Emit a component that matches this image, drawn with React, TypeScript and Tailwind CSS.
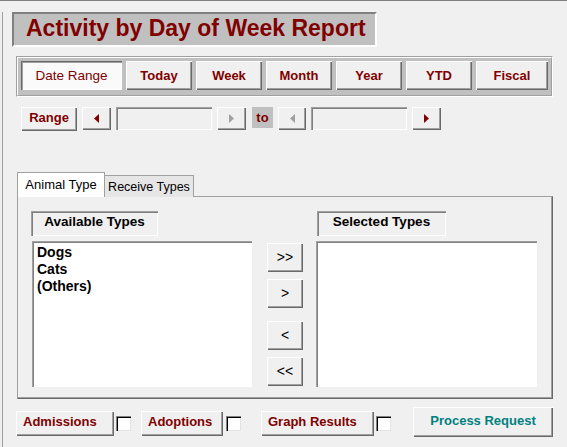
import React, { useState } from 'react';

// classic windows bevels
const raised =
  'bg-[#f0f0f0] shadow-[inset_1px_1px_0_#ffffff,inset_-1px_-1px_0_#696969,inset_-2px_-2px_0_#a0a0a0]';
const pressed =
  'bg-[#fafafa] shadow-[inset_1px_1px_0_#696969,inset_2px_2px_0_#a0a0a0,inset_-1px_-1px_0_#ffffff]';
const sunken =
  'shadow-[inset_1px_1px_0_#a0a0a0,inset_2px_2px_0_#808080,inset_-1px_-1px_0_#ffffff]';

function Arrow({ dir, disabled }: { dir: 'left' | 'right'; disabled?: boolean }) {
  const fill = disabled ? '#a0a0a0' : '#800000';
  return (
    <svg width="5" height="9" viewBox="0 0 5 9">
      {dir === 'left' ? <polygon points="5,0 0,4.5 5,9" fill={fill} /> : <polygon points="0,0 5,4.5 0,9" fill={fill} />}
    </svg>
  );
}

function CheckBox() {
  const [on, setOn] = useState(false);
  return (
    <button
      onClick={() => setOn(!on)}
      className="mt-[9px] w-[15px] h-[15px] bg-white shadow-[inset_1px_1px_0_#808080,inset_2px_2px_0_#000000,inset_-1px_-1px_0_#e3e3e3] flex items-center justify-center text-[11px] leading-none"
    >
      {on ? '✓' : ''}
    </button>
  );
}

export default function App() {
  const periodes = [
    { label: 'Today', w: 'w-[66px]' },
    { label: 'Week', w: 'w-[66px]' },
    { label: 'Month', w: 'w-[66px]' },
    { label: 'Year', w: 'w-[66px]' },
    { label: 'YTD', w: 'w-[66px]' },
    { label: 'Fiscal', w: 'w-[72px]' },
  ];
  const [tab, setTab] = useState<'animal' | 'receive'>('animal');
  const types = ['Dogs', 'Cats', '(Others)'];

  return (
    <div className="w-[567px] h-[447px] overflow-hidden bg-[#f0f0f0] border-t border-[#808080] font-['Liberation_Sans',Arial,sans-serif]">
      <div className="ml-[2px] h-[446px] border-l border-[#a0a0a0]">
        {/* Titre */}
        <div className="ml-[9px] mt-[11px] w-[365px] h-[35px] bg-[#c0c0c0] border-t-2 border-l-2 border-t-[#808080] border-l-[#808080] border-b-2 border-r-2 border-b-white border-r-white flex items-center pl-[12px] pb-[2px]">
          <h1 className="text-[23px] font-bold text-[#800000] leading-none">Activity by Day of Week Report</h1>
        </div>

        {/* Periodes */}
        <div className="ml-[13px] mt-[9px] w-[537px] h-[41px] border border-t-[#a0a0a0] border-l-[#a0a0a0] border-b-white border-r-white">
          <div className="h-full bg-[#c0c0c0] border border-t-white border-l-white border-b-[#a0a0a0] border-r-[#a0a0a0] pl-[3px] pr-[1px] pt-[3px] flex gap-[4px]">
            <button className={`w-[101px] h-[29px] ${pressed} text-[13.5px] text-[#800000] pt-[1px]`}>Date Range</button>
            {periodes.map((p) => (
              <button key={p.label} className={`${p.w} h-[29px] ${raised} text-[13px] font-bold text-[#800000]`}>
                {p.label}
              </button>
            ))}
          </div>
        </div>

        {/* Range */}
        <div className="ml-[18px] mt-[10px] flex items-start gap-[5px]">
          <button className={`w-[56px] h-[24px] ${raised} text-[13px] font-bold text-[#800000] pb-[3px]`}>Range</button>
          <button className={`w-[29px] h-[23px] ${raised} flex items-center justify-center`}>
            <Arrow dir="left" />
          </button>
          <div className={`w-[96px] h-[23px] bg-[#f0f0f0] ${sunken}`} />
          <button className={`w-[29px] h-[23px] ${raised} flex items-center justify-center`}>
            <Arrow dir="right" disabled />
          </button>
          <div className="ml-px w-[21px] h-[21px] bg-[#c0c0c0] flex items-center justify-center text-[13px] font-bold text-[#800000]">to</div>
          <button className={`w-[28px] h-[23px] ${raised} flex items-center justify-center`}>
            <Arrow dir="left" disabled />
          </button>
          <div className={`w-[96px] h-[23px] bg-[#f0f0f0] ${sunken}`} />
          <button className={`w-[29px] h-[23px] ${raised} flex items-center justify-center`}>
            <Arrow dir="right" />
          </button>
        </div>

        {/* Onglets */}
        <div className="ml-[14px] mt-[41px] flex items-end -mb-px relative z-10">
          <button
            onClick={() => setTab('animal')}
            className={`w-[88px] h-[25px] border-t border-l border-r border-[#a0a0a0] text-[13px] text-black ${tab === 'animal' ? 'bg-white' : 'bg-[#e6e6e6]'}`}
          >
            Animal Type
          </button>
          <button
            onClick={() => setTab('receive')}
            className={`w-[89px] h-[22px] border-t border-r border-[#a0a0a0] text-[12.5px] text-black pt-[2px] ${tab === 'receive' ? 'bg-white' : 'bg-[#e6e6e6]'}`}
          >
            Receive Types
          </button>
        </div>
        <div className="ml-[14px] w-[536px] h-[203px] border-t border-l border-[#a0a0a0] border-b border-r border-b-[#696969] border-r-[#696969] shadow-[inset_-1px_-1px_0_#a0a0a0] pl-[13px] pt-[14px] flex">
          <div className="w-[221px]">
            <div className={`w-[127px] h-[25px] ${sunken} flex items-center justify-center pb-[2px] text-[13.5px] font-bold text-black`}>
              Available Types
            </div>
            <div className={`ml-px mt-[5px] w-[220px] h-[146px] bg-white ${sunken} pl-[5px] pt-[3px]`}>
              {types.map((t) => (
                <div key={t} className="text-[14px] font-bold leading-[17px] text-black">
                  {t}
                </div>
              ))}
            </div>
          </div>
          <div className="ml-[15px] w-[36px] pt-[32px] flex flex-col">
            <button className={`h-[29px] ${raised} text-[14px] text-black`}>&gt;&gt;</button>
            <button className={`mt-[7px] h-[29px] ${raised} text-[14px] text-black`}>&gt;</button>
            <button className={`mt-[13px] h-[29px] ${raised} text-[14px] text-black`}>&lt;</button>
            <button className={`mt-[7px] h-[29px] ${raised} text-[14px] text-black`}>&lt;&lt;</button>
          </div>
          <div className="ml-[13px] w-[221px]">
            <div className={`ml-px w-[129px] h-[25px] ${sunken} flex items-center justify-center pb-[2px] text-[13.5px] font-bold text-black`}>
              Selected Types
            </div>
            <div className={`mt-[5px] w-[221px] h-[146px] bg-white ${sunken}`} />
          </div>
        </div>

        {/* Options */}
        <div className="ml-[13px] mt-[8px] flex items-start">
          <button className={`mt-[4px] w-[98px] h-[25px] ${raised} text-left pl-[7px] pb-[3px] text-[13px] font-bold text-[#800000]`}>Admissions</button>
          <div className="ml-[2px]">
            <CheckBox />
          </div>
          <button className={`ml-[10px] mt-[4px] w-[82px] h-[25px] ${raised} text-left pl-[7px] pb-[3px] text-[13px] font-bold text-[#800000]`}>Adoptions</button>
          <div className="ml-[3px]">
            <CheckBox />
          </div>
          <button className={`ml-[20px] mt-[4px] w-[113px] h-[25px] ${raised} text-left pl-[7px] pb-[3px] text-[13px] font-bold text-[#800000]`}>Graph Results</button>
          <div className="ml-[2px]">
            <CheckBox />
          </div>
          <button className={`ml-[22px] w-[140px] h-[30px] ${raised} pb-[2px] text-[13px] font-bold text-[#008080]`}>Process Request</button>
        </div>
      </div>
    </div>
  );
}
